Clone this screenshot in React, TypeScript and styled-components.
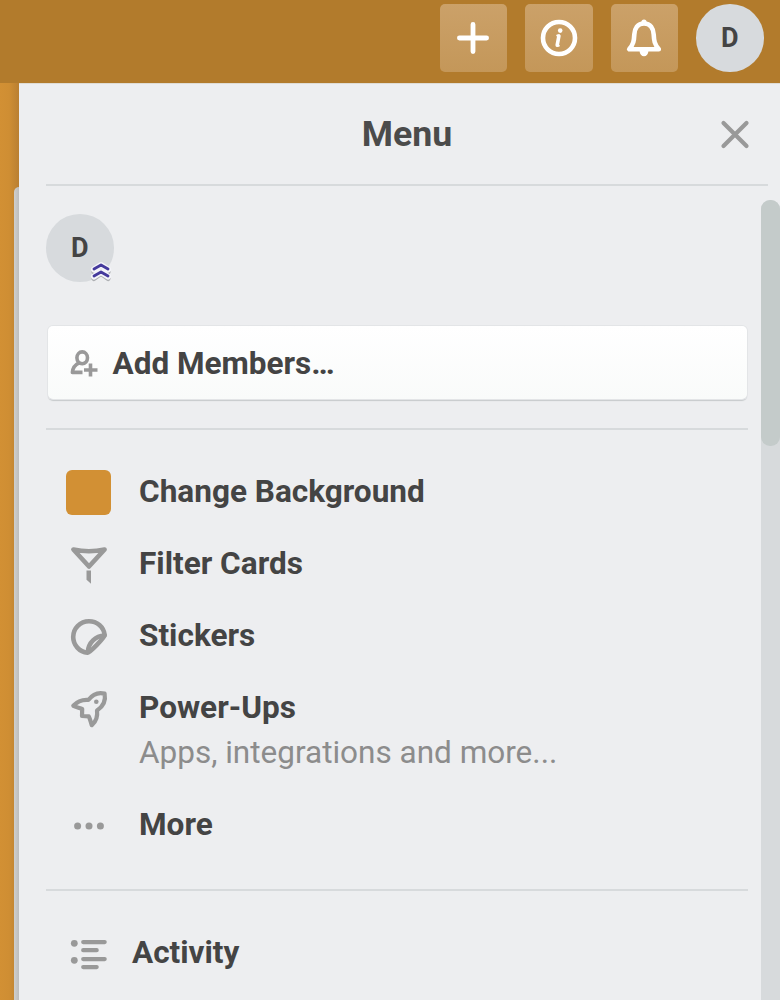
import React from "react";
import styled, { createGlobalStyle } from "styled-components";

const Global = createGlobalStyle`
  *, *::before, *::after { box-sizing: border-box; }
  body { margin: 0; background: #edeef0; font-family: Roboto, "Liberation Sans", sans-serif; color: #444; overflow: hidden; }
  svg { display: block; flex: none; overflow: visible; }
`;

const Page = styled.div`
  width: 780px;
  height: 1000px;
  display: flex;
  flex-direction: column;
  overflow: hidden;
`;

const TopBar = styled.header`
  height: 83px;
  flex: none;
  display: flex;
  justify-content: flex-end;
  gap: 18px;
  padding: 4px 16.5px 0 0;
  background: #b27b2c;
`;

const BarButton = styled.button`
  width: 67.5px;
  height: 68px;
  padding: 0;
  border: 0;
  border-radius: 5px;
  display: grid;
  place-items: center;
  background: linear-gradient(#cba169, #c49759);
`;

const Avatar = styled.div`
  position: relative;
  width: 67.5px;
  height: 67.5px;
  padding-top: 2px;
  border-radius: 50%;
  display: grid;
  place-items: center;
  background: #d7dadd;
  font-size: 27px;
  font-weight: 700;
  line-height: 1;
`;

const AdminBadge = styled.svg`
  position: absolute;
  left: 44px;
  top: 46px;
`;

const Body = styled.div`
  flex: 1;
  min-height: 0;
  display: flex;
`;

const Board = styled.div`
  width: 19px;
  flex: none;
  display: flex;
  justify-content: flex-end;
  padding-top: 104px;
  background: linear-gradient(90deg, #d29034 0, #cf8e33 9px, #b97f31 19px);
`;

const ListEdge = styled.div`
  width: 5px;
  border-radius: 5px 0 0 0;
  background: linear-gradient(90deg, #cfcecb, #bdbdbc);
`;

const Panel = styled.aside`
  flex: 1;
  min-width: 0;
  display: flex;
  flex-direction: column;
  background: #edeef0;
  border-top: 1px solid #dfdcd5;
`;

const PanelHeader = styled.div`
  height: 102px;
  flex: none;
  margin: 0 12px 0 27px;
  border-bottom: 2px solid #d7dadc;
  display: grid;
  grid-template-columns: 1fr 28px;
  align-items: center;
  padding-right: 19px;
`;

const Title = styled.h1`
  margin: 0;
  padding-left: 47px;
  text-align: center;
  font-size: 35.7px;
  line-height: 42px;
  font-weight: 700;
  color: #4b4b4b;
`;

const Scroller = styled.div`
  flex: 1;
  min-height: 0;
  display: flex;
  justify-content: space-between;
`;

const Content = styled.div`
  width: 702px;
  margin-left: 27px;
  padding-top: 28px;
`;

const Track = styled.div`
  width: 19px;
  margin-top: 14px;
  background: #d7dadc;
  border-radius: 9px 9px 0 0;
`;

const Thumb = styled.div`
  height: 246px;
  border-radius: 9px;
  background: #c4cbca;
`;

const AddButton = styled.button`
  width: 699px;
  height: 73px;
  margin: 44.5px 1.5px 0;
  padding: 2px 0 0 22px;
  display: flex;
  align-items: center;
  gap: 15px;
  border: 0;
  border-radius: 5px;
  background: linear-gradient(#ffffff, #f9fbfa);
  box-shadow: 0 0 0 1px #e3e5e7, 0 2px 1px #c6c9cb;
  font: 700 31.5px/38px Roboto, sans-serif;
  color: #444;
`;

const Rule = styled.div<{ $top: number }>`
  height: 2px;
  margin-top: ${(p) => p.$top}px;
  background: #d7dadc;
`;

const Items = styled.nav`
  padding: 25px 0 0 20px;
`;

const Item = styled.div<{ $tall?: boolean }>`
  height: ${(p) => (p.$tall ? 117 : 72)}px;
  display: grid;
  grid-template-columns: 45px 1fr;
  column-gap: 28px;
  align-items: start;
`;

const IconSlot = styled.div`
  height: 75px;
  display: grid;
  place-items: center;
`;

const Label = styled.div`
  padding-top: 18px;
  font-size: 31.55px;
  line-height: 38px;
  font-weight: 700;
  white-space: nowrap;
`;

const Note = styled.div`
  margin-top: 6px;
  font-size: 31.5px;
  line-height: 40px;
  font-weight: 400;
  color: #8c8c8c;
`;

const Swatch = styled.div`
  width: 45px;
  height: 45px;
  border-radius: 6px;
  background: #d29034;
`;

const Activity = styled.div`
  display: flex;
  align-items: center;
  gap: 25px;
  padding: 43px 0 0 24px;
  font-size: 31.5px;
  line-height: 38px;
  font-weight: 700;
`;

const line = {
  fill: "none",
  stroke: "#999",
  strokeLinecap: "round" as const,
  strokeLinejoin: "round" as const,
};

const PlusIcon = () => (
  <svg width="32" height="32" fill="none" stroke="#fff" strokeWidth="4.8" strokeLinecap="round">
    <path d="M16 2.4v27.2M2.4 16h27.2" />
  </svg>
);

const InfoIcon = () => (
  <svg width="38" height="38" fill="none" stroke="#fff" strokeLinecap="round">
    <circle cx="19" cy="19" r="16" strokeWidth="4.6" />
    <path d="M18.9 17L17.2 26.2" strokeWidth="3.6" />
    <path d="M17.2 16.4h2M17.2 26.7h1.6" strokeWidth="2" />
    <circle cx="20.2" cy="11.6" r="2.3" fill="#fff" stroke="none" />
  </svg>
);

const BellIcon = () => (
  <svg width="36" height="38" fill="none" stroke="#fff" strokeWidth="4.6" strokeLinejoin="round">
    <path d="M18 4.5C11.5 4.5 8.7 9.5 8.3 15.5C8 22 7.5 25 3.2 30.2H32.8C28.5 25 28 22 27.7 15.5C27.3 9.5 24.5 4.5 18 4.5Z" />
    <path d="M13.6 32h8.8a4.4 5.2 0 0 1-8.8 0Z" fill="#fff" stroke="none" />
    <circle cx="18" cy="3" r="2.6" fill="#fff" stroke="none" />
  </svg>
);

const CloseIcon = () => (
  <svg width="28" height="28" {...line} strokeWidth="4.2">
    <path d="M2.5 3l23 23M25.5 3l-23 23" />
  </svg>
);

const AddMemberIcon = () => (
  <svg width="28" height="28" {...line} strokeWidth="3.6" strokeLinecap="butt">
    <ellipse cx="12.2" cy="7.8" rx="5.3" ry="5.9" />
    <path d="M9 12.8C4.5 15 2.7 17.500 2.4 22.400H12.5" />
    <path d="M20.500 13.500v13M14 20h13.500" />
  </svg>
);

const FilterIcon = () => (
  <svg width="36" height="36" {...line}>
    <path d="M2.4 2.5Q18 6 33.6 2.5L18 19.5Z" strokeWidth="4.6" />
    <path d="M15.5 23.5h4.500v13.300l-4.500-4Z" fill="#999" stroke="none" />
  </svg>
);

const StickerIcon = () => (
  <svg width="36" height="36" {...line} strokeWidth="4.6">
    <path d="M33.7 16C32.6 8 26 2.2 18 2.2C9.2 2.2 2.2 9.2 2.2 18C2.2 26 8.4 33 16.6 33.8C18.5 33.8 33.7 18.5 33.7 16Z" />
    <path d="M33.5 16.5C24.5 17 17.5 23.5 16.8 33" />
  </svg>
);

const RocketIcon = () => (
  <svg width="36" height="36" {...line} strokeWidth="4.2">
    <path d="M33.6 2.6C27.5 1 21.5 3.500 17.3 9C11.500 8.500 6 10.800 2.300 14.800C5.500 16.300 8.500 17 11.200 18L11 25L17.800 25.400C19.200 28 19.800 31.500 20.800 34.200C25 30.500 26.800 25 26 19.500C32 15.500 35 9.500 33.600 2.600Z" />
    <circle cx="25.3" cy="10.8" r="2.3" fill="#999" stroke="none" />
  </svg>
);

const DotsIcon = () => (
  <svg width="30" height="8" fill="#999">
    <circle cx="3.6" cy="4" r="3.5" />
    <circle cx="15" cy="4" r="3.5" />
    <circle cx="26.4" cy="4" r="3.5" />
  </svg>
);

const ActivityIcon = () => (
  <svg width="37" height="30" {...line} strokeWidth="4.2">
    <path d="M13.2 4.100h21.500M13.2 12.200h13.500M13.2 21.100h21.500M13.2 29.100h13.500" />
    <circle cx="4.3" cy="5.3" r="3.4" fill="#999" stroke="none" />
    <circle cx="4.3" cy="22.3" r="3.4" fill="#999" stroke="none" />
  </svg>
);

const App: React.FC = () => (
  <>
    <Global />
    <Page>
      <TopBar>
        <BarButton aria-label="Create"><PlusIcon /></BarButton>
        <BarButton aria-label="Information"><InfoIcon /></BarButton>
        <BarButton aria-label="Notifications"><BellIcon /></BarButton>
        <Avatar>D</Avatar>
      </TopBar>
      <Body>
        <Board><ListEdge /></Board>
        <Panel>
          <PanelHeader>
            <Title>Menu</Title>
            <CloseIcon />
          </PanelHeader>
          <Scroller>
            <Content>
              <Avatar>
                D
                <AdminBadge width="22" height="22" fill="none" strokeLinecap="round" strokeLinejoin="round">
                  <path d="M4 11l7-5 7 5M4 17.5l7-5 7 5" stroke="#aeb0b3" strokeWidth="5" transform="translate(0 1)" />
                  <path d="M4 9.5l7-4.5 7 4.5M4 16.5l7-4.5 7 4.5" stroke="#f5f5fa" strokeWidth="6" />
                  <path d="M4 9l7-4 7 4M4 16l7-4 7 4" stroke="#453a9c" strokeWidth="2.8" />
                </AdminBadge>
              </Avatar>
              <AddButton><AddMemberIcon />Add Members…</AddButton>
              <Rule $top={29} />
              <Items>
                <Item><IconSlot><Swatch /></IconSlot><Label>Change Background</Label></Item>
                <Item><IconSlot><FilterIcon /></IconSlot><Label>Filter Cards</Label></Item>
                <Item><IconSlot><StickerIcon /></IconSlot><Label>Stickers</Label></Item>
                <Item $tall>
                  <IconSlot><RocketIcon /></IconSlot>
                  <Label>Power-Ups<Note>Apps, integrations and more...</Note></Label>
                </Item>
                <Item><IconSlot><DotsIcon /></IconSlot><Label>More</Label></Item>
              </Items>
              <Rule $top={29} />
              <Activity><ActivityIcon />Activity</Activity>
            </Content>
            <Track><Thumb /></Track>
          </Scroller>
        </Panel>
      </Body>
    </Page>
  </>
);

export default App;
